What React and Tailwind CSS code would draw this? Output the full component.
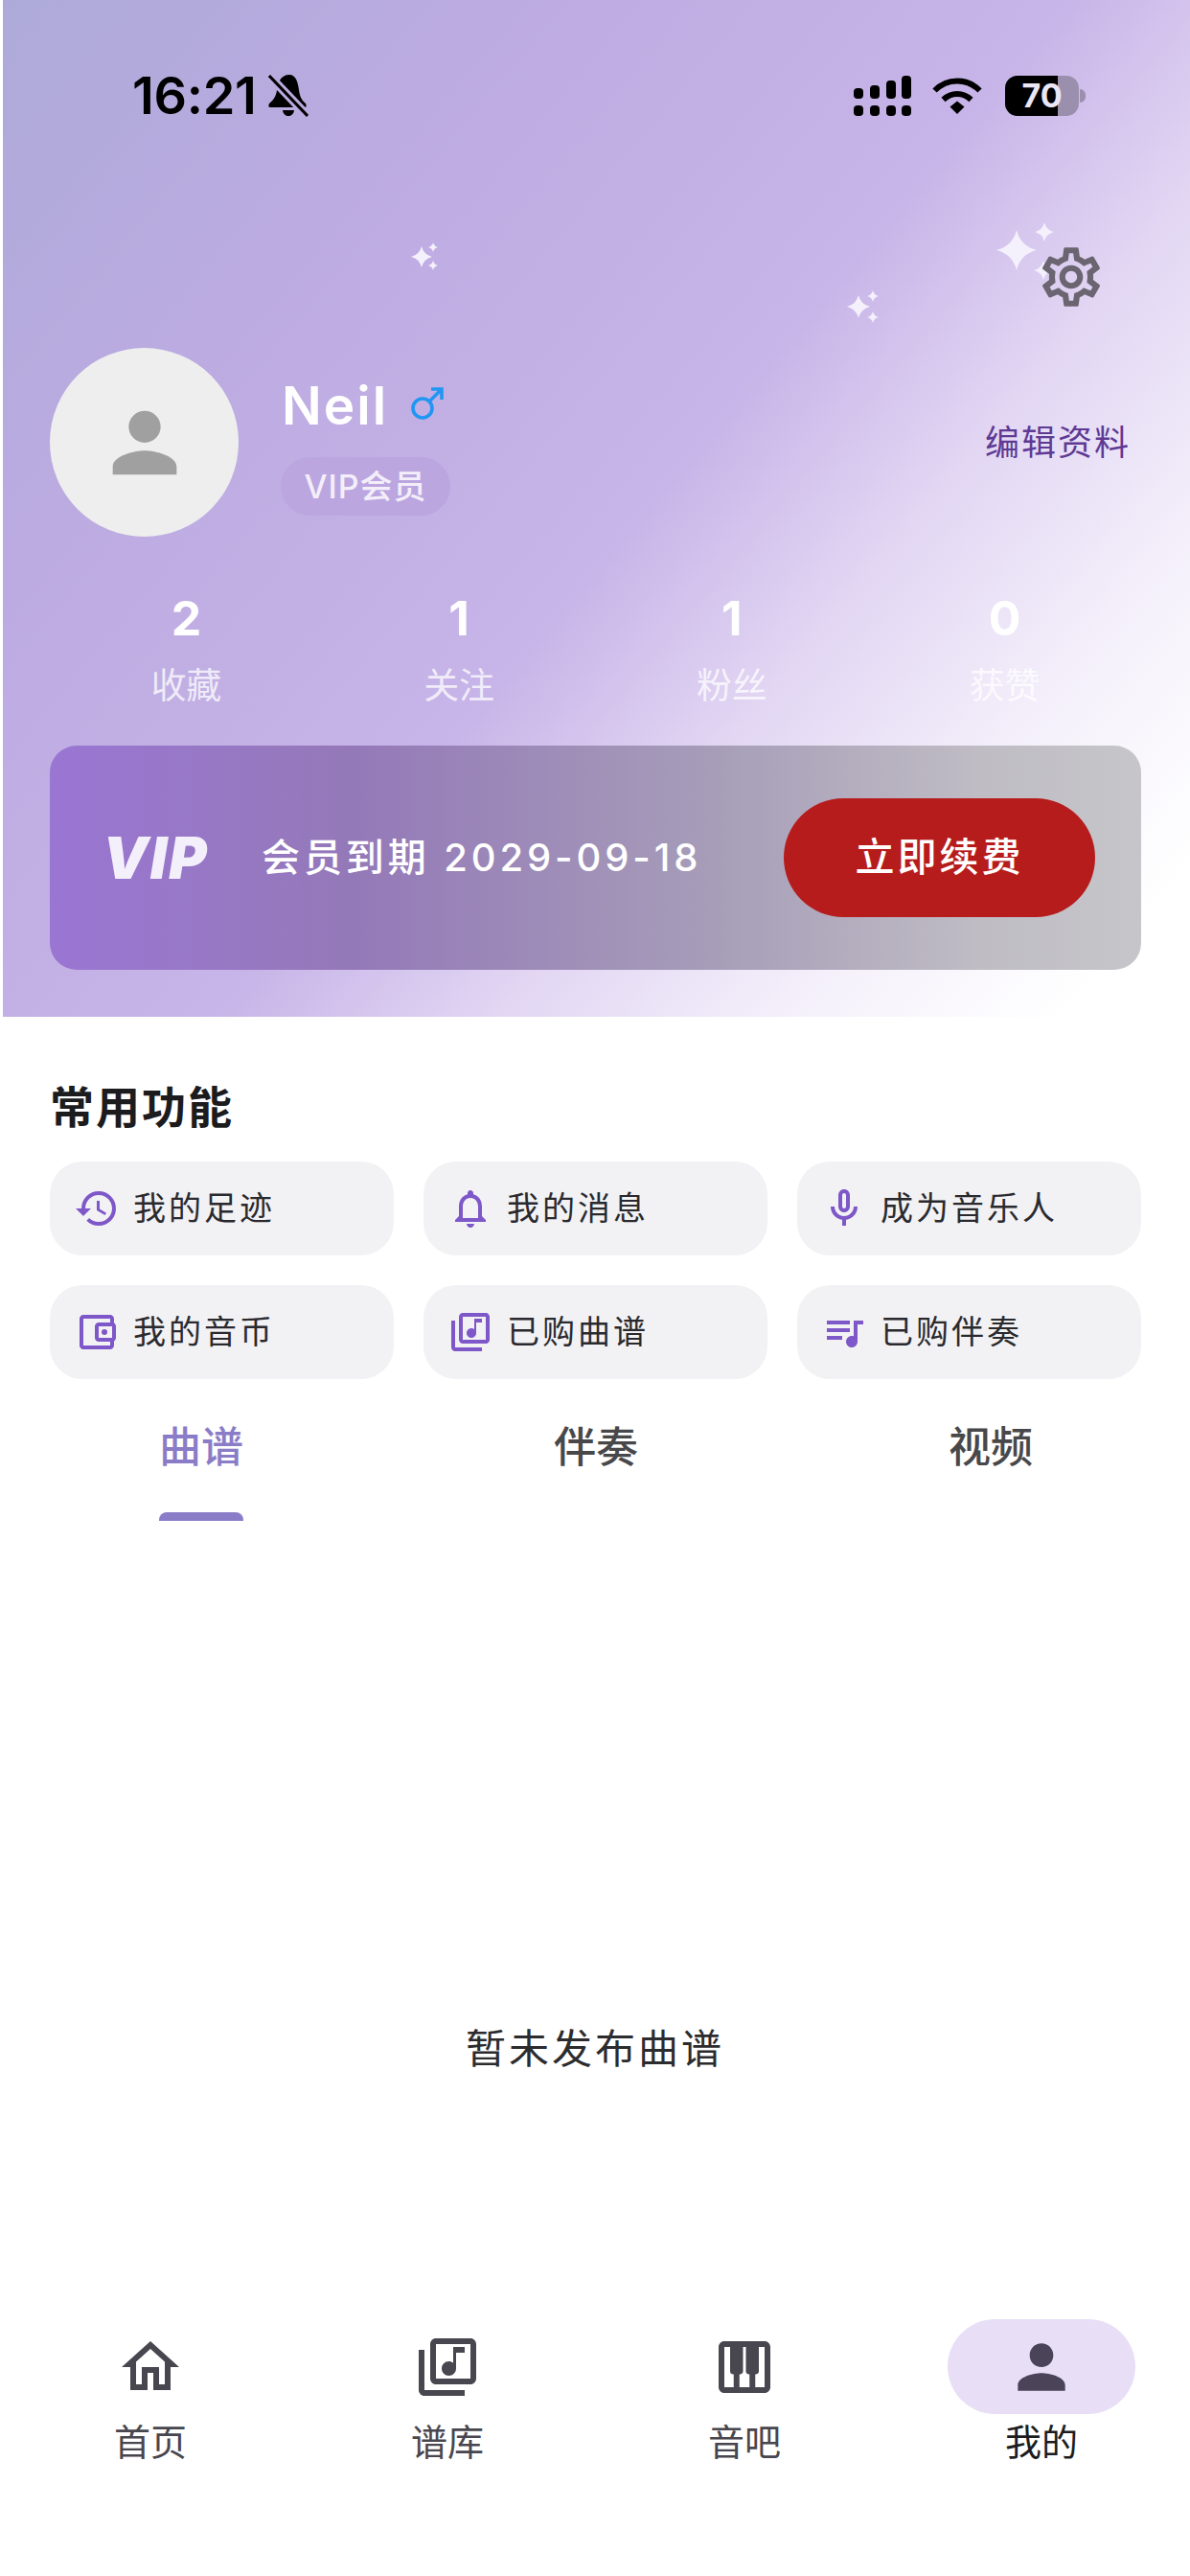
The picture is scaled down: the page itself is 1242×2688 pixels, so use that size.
const PURPLE = "#7e57c8";

function Icon({ d, size, color, children, className = "" }) {
  return (
    <svg width={size} height={size} viewBox="0 0 24 24" fill={color} className={`shrink-0 ${className}`}>
      <path d={d} />
      {children}
    </svg>
  );
}

const paths = {
  gear:
    "M19.43 12.98c.04-.32.07-.64.07-.98 0-.34-.03-.66-.07-.98l2.11-1.65c.19-.15.24-.42.12-.64l-2-3.46c-.09-.16-.26-.25-.44-.25-.06 0-.12.01-.17.03l-2.49 1c-.52-.4-1.08-.73-1.69-.98l-.38-2.65C14.46 2.18 14.25 2 14 2h-4c-.25 0-.46.18-.49.42l-.38 2.65c-.61.25-1.17.59-1.69.98l-2.49-1c-.06-.02-.12-.03-.18-.03-.17 0-.34.09-.43.25l-2 3.46c-.13.22-.07.49.12.64l2.11 1.65c-.04.32-.07.65-.07.98 0 .33.03.66.07.98l-2.11 1.65c-.19.15-.24.42-.12.64l2 3.46c.09.16.26.25.44.25.06 0 .12-.01.17-.03l2.49-1c.52.4 1.08.73 1.69.98l.38 2.65c.03.24.24.42.49.42h4c.25 0 .46-.18.49-.42l.38-2.65c.61-.25 1.17-.59 1.69-.98l2.49 1c.06.02.12.03.18.03.17 0 .34-.09.43-.25l2-3.46c.12-.22.07-.49-.12-.64l-2.11-1.65zm-1.98-1.71c.04.31.05.52.05.73 0 .21-.02.43-.05.73l-.14 1.13.89.7 1.08.84-.7 1.21-1.27-.51-1.04-.42-.9.68c-.43.32-.84.56-1.25.73l-1.06.43-.16 1.13-.2 1.35h-1.4l-.19-1.35-.16-1.13-1.06-.43c-.43-.18-.83-.41-1.23-.71l-.91-.7-1.06.43-1.27.51-.7-1.21 1.08-.84.89-.7-.14-1.13c-.03-.31-.05-.54-.05-.74s.02-.43.05-.73l.14-1.13-.89-.7-1.08-.84.7-1.21 1.27.51 1.04.42.9-.68c.43-.32.84-.56 1.25-.73l1.06-.43.16-1.13.2-1.35h1.39l.19 1.35.16 1.13 1.06.43c.43.18.83.41 1.23.71l.91.7 1.06-.43 1.27-.51.7 1.21-1.07.85-.89.7.14 1.13zM12 8c-2.21 0-4 1.79-4 4s1.79 4 4 4 4-1.79 4-4-1.79-4-4-4zm0 6c-1.1 0-2-.9-2-2s.9-2 2-2 2 .9 2 2-.9 2-2 2z",
  person:
    "M12 12c2.21 0 4-1.79 4-4s-1.79-4-4-4-4 1.79-4 4 1.79 4 4 4zm0 2c-2.67 0-8 1.34-8 4v2h16v-2c0-2.66-5.33-4-8-4z",
  history:
    "M13 3a9 9 0 0 0-9 9H1l3.89 3.89.07.14L9 12H6c0-3.87 3.13-7 7-7s7 3.13 7 7-3.13 7-7 7c-1.93 0-3.68-.79-4.94-2.06l-1.42 1.42A8.954 8.954 0 0 0 13 21a9 9 0 0 0 0-18zm-1 5v5l4.28 2.54.72-1.21-3.5-2.08V8H12z",
  bell:
    "M12 22c1.1 0 2-.9 2-2h-4c0 1.1.9 2 2 2zm6-6v-5c0-3.07-1.63-5.64-4.5-6.32V4c0-.83-.67-1.5-1.5-1.5s-1.5.67-1.5 1.5v.68C7.64 5.36 6 7.92 6 11v5l-2 2v1h16v-1l-2-2zm-2 1H8v-6c0-2.48 1.51-4.5 4-4.5s4 2.02 4 4.5v6z",
  mic:
    "M12 14c1.66 0 3-1.34 3-3V5c0-1.66-1.34-3-3-3S9 3.34 9 5v6c0 1.66 1.34 3 3 3zm-1-9c0-.55.45-1 1-1s1 .45 1 1v6c0 .55-.45 1-1 1s-1-.45-1-1V5zm6 6c0 2.76-2.24 5-5 5s-5-2.24-5-5H5c0 3.53 2.61 6.43 6 6.92V21h2v-3.08c3.39-.49 6-3.39 6-6.92h-2z",
  wallet:
    "M21 7.28V5c0-1.1-.9-2-2-2H5c-1.11 0-2 .9-2 2v14c0 1.1.89 2 2 2h14c1.1 0 2-.9 2-2v-2.28c.59-.35 1-.98 1-1.72V9c0-.74-.41-1.38-1-1.72zM20 9v6h-7V9h7zM5 19V5h14v2h-6c-1.1 0-2 .9-2 2v6c0 1.1.9 2 2 2h6v2H5z",
  library:
    "M20 2H8c-1.1 0-2 .9-2 2v12c0 1.1.9 2 2 2h12c1.1 0 2-.9 2-2V4c0-1.1-.9-2-2-2zm0 14H8V4h12v12zm-7.5-1c1.38 0 2.5-1.12 2.5-2.5V7h3V5h-4v5.51c-.42-.32-.93-.51-1.5-.51-1.38 0-2.5 1.12-2.5 2.5s1.12 2.5 2.5 2.5zM4 6H2v14c0 1.1.9 2 2 2h14v-2H4V6z",
  queue:
    "M15 6H3v2h12V6zm0 4H3v2h12v-2zM3 16h8v-2H3v2zM17 6v8.18c-.31-.11-.65-.18-1-.18-1.66 0-3 1.34-3 3s1.34 3 3 3 3-1.34 3-3V8h3V6h-5z",
  home: "M12 5.69l5 4.5V18h-2v-6H9v6H7v-7.81l5-4.5M12 3L2 12h3v8h6v-6h2v6h6v-8h3L12 3z",
  piano:
    "M19 3H5c-1.1 0-2 .9-2 2v14c0 1.1.9 2 2 2h14c1.1 0 2-.9 2-2V5c0-1.1-.9-2-2-2zm-5.5 11.5h.25V19h-3.5v-4.5h.25c.55 0 1-.45 1-1V5h1v8.5c0 .55.45 1 1 1zM5 5h2v8.5c0 .55.45 1 1 1h.25V19H5V5zm14 14h-3.25v-4.5H16c.55 0 1-.45 1-1V5h2v14z",
};

function Star({ x, y, r }) {
  const k = r * 0.2;
  const d = `M${x} ${y - r}Q${x + k} ${y - k} ${x + r} ${y}Q${x + k} ${y + k} ${x} ${y + r}Q${x - k} ${y + k} ${x - r} ${y}Q${x - k} ${y - k} ${x} ${y - r}Z`;
  return <path d={d} fill="#f4f0fc" />;
}

function StatusBar() {
  return (
    <div className="flex h-[60px] items-center justify-between pl-[135px] pr-[109px] text-black">
      <div className="flex items-center">
        <span className="text-[54px] font-semibold leading-[60px] tracking-[-0.3px]">16:21</span>
        {/* muted bell */}
        <svg width="42" height="44" viewBox="0 0 42 44" className="ml-[12px] shrink-0">
          <path d="M22 0C13 0 10 8 9 16C8 23 5 27 1 30C0 32 0 34 2 34H38C40 34 40 32 39 30C35 27 33 23 32 16C31 8 29 0 22 0Z" />
          <path d="M15 37H27C26 45 16 45 15 37Z" />
          <path d="M0 0L41 43" stroke="#bbaadf" strokeWidth="9" />
          <path d="M1 1L41 43" stroke="#000" strokeWidth="3" />
        </svg>
      </div>
      <div className="flex items-center">
        {/* signal */}
        <svg width="60" height="42" viewBox="0 0 60 42" className="shrink-0">
          <rect x="0" y="13" width="10" height="11" rx="4" />
          <rect x="17" y="10" width="10" height="14" rx="4" />
          <rect x="34" y="5" width="10" height="19" rx="4" />
          <rect x="50" y="0" width="10" height="24" rx="4" />
          <rect x="0" y="31" width="10" height="11" rx="4" />
          <rect x="17" y="31" width="10" height="11" rx="4" />
          <rect x="34" y="31" width="10" height="11" rx="4" />
          <rect x="50" y="31" width="10" height="11" rx="4" />
        </svg>
        {/* wifi */}
        <svg width="52" height="38" viewBox="0 0 52 38" fill="none" stroke="#000" strokeWidth="6" className="ml-[22px] shrink-0">
          <path d="M2.5 13.5C15.5 0 36.5 0 49.5 13.5" />
          <path d="M11.5 23C20 15 32 15 40.5 23" />
          <path d="M18.5 30.5L26 24.5L33.5 30.5L26 38Z" fill="#000" stroke="none" />
        </svg>
        {/* battery */}
        <div className="relative ml-[24px] flex h-[42px] w-[77px] overflow-hidden rounded-[13px] bg-[#9a8fad]">
          <div className="h-full w-[55px] bg-black" />
          <span className="absolute inset-0 flex items-center justify-center text-[34px] font-bold leading-none text-[#ebe6f5]">70</span>
        </div>
        <div className="ml-[1px] h-[14px] w-[6px] rounded-r-full bg-[#9a8fad]" />
      </div>
    </div>
  );
}

function Stat({ value, label }) {
  return (
    <div className="flex flex-col items-center">
      <span className="text-[50px] font-bold leading-[60px] text-white">{value}</span>
      <span className="mt-[17px] text-[37px] leading-[48px] text-white/75">{label}</span>
    </div>
  );
}

function Header() {
  return (
    <div className="relative ml-[3px] h-[1061px] bg-[linear-gradient(130deg,#adaad9_0%,#bcabe1_25%,#c7b4e8_52%,#e2d6f3_66%,#f5f1fb_81%,#ffffff_94%)] pt-[70px]">
      <svg width="1239" height="400" className="absolute left-0 top-0">
        <g transform="translate(-3 0)">
          <Star x={440} y={268} r={11} />
          <Star x={452} y={258} r={5} />
          <Star x={452} y={277} r={5} />
          <Star x={896} y={320} r={12} />
          <Star x={911} y={309} r={6} />
          <Star x={911} y={331} r={6} />
          <Star x={1061} y={261} r={21} />
          <Star x={1090} y={242} r={10} />
          <Star x={1089} y={282} r={10} />
        </g>
      </svg>
      <StatusBar />

      <div className="relative mt-[122px] flex h-[74px] justify-end pr-[87px]">
        <Icon d={paths.gear} size={74} color="#6a6570" />
      </div>

      <div className="relative mt-[37px] flex h-[197px] items-center pl-[49px] pr-[62px]">
        <div className="flex h-[197px] w-[197px] shrink-0 items-center justify-center rounded-full bg-[#eeeeee]">
          <Icon d={paths.person} size={100} color="#a0a0a0" />
        </div>
        <div className="ml-[45px] flex flex-col self-start pt-[30px]">
          <div className="flex h-[60px] items-center">
            <span className="text-[55px] font-semibold leading-[60px] tracking-[2px] text-white">Neil</span>
            <svg width="36" height="36" viewBox="0 0 36 36" fill="none" stroke="#2196f3" strokeWidth="3.6" className="ml-[23px] mt-[-4px]">
              <circle cx="13" cy="23" r="10" />
              <path d="M20.5 15.5L33 3M22 3H33V14" />
            </svg>
          </div>
          <div className="-ml-[1px] mt-[24px] flex h-[61px] w-[177px] items-center justify-center rounded-full bg-[#bba6e0] text-[34px] font-medium leading-none tracking-[1px] text-[#f3eefa]">
            VIP会员
          </div>
        </div>
        <span className="ml-auto text-[36px] leading-[48px] tracking-[2px] text-[#5e3a94]">编辑资料</span>
      </div>

      <div className="relative mt-[55px] grid grid-cols-4 pl-[49px] pr-[51px]">
        <Stat value="2" label="收藏" />
        <Stat value="1" label="关注" />
        <Stat value="1" label="粉丝" />
        <Stat value="0" label="获赞" />
      </div>

      <div className="relative ml-[49px] mr-[51px] mt-[38px] flex h-[234px] items-center rounded-[28px] bg-[linear-gradient(90deg,#9a76d3_0%,#9479b8_28%,#a69cb8_60%,#bfbcc4_85%,#c6c6ca_100%)] pl-[55px]">
        <span className="w-[112px] text-[60px] font-black italic leading-none tracking-[2px] text-[#f4f0fb]">VIP</span>
        <span className="ml-[54px] text-[40px] font-medium leading-[50px] tracking-[3.9px] text-white">会员到期 2029-09-18</span>
        <button className="absolute right-[48px] top-[55px] flex h-[124px] w-[325px] items-center justify-center rounded-full bg-[#b71c1c] text-[41px] font-medium tracking-[3px] text-white">
          立即续费
        </button>
      </div>
    </div>
  );
}

const shortcuts = [
  { label: "我的足迹", d: paths.history },
  { label: "我的消息", d: paths.bell },
  { label: "成为音乐人", d: paths.mic },
  { label: "我的音币", d: paths.wallet, dot: true },
  { label: "已购曲谱", d: paths.library },
  { label: "已购伴奏", d: paths.queue },
];

function Shortcuts() {
  return (
    <div className="pl-[52px] pr-[51px] pt-[64px]">
      <h2 className="mb-[27px] text-[46px] font-semibold leading-[60px] tracking-[2px] text-[#1c1c1e]">常用功能</h2>
      <div className="grid grid-cols-3 gap-x-[31px] gap-y-[31px]">
        {shortcuts.map((s) => (
          <div key={s.label} className="flex h-[98px] items-center rounded-[34px] bg-[#f2f2f5] pl-[25px]">
            <Icon d={s.d} size={48} color={PURPLE}>
              {s.dot && <circle cx="16" cy="12" r="1.5" />}
            </Icon>
            <span className="ml-[14px] text-[34px] leading-[44px] tracking-[3px] text-[#2a2a2e]">{s.label}</span>
          </div>
        ))}
      </div>
    </div>
  );
}

function Tabs() {
  const tabs = ["曲谱", "伴奏", "视频"];
  return (
    <div className="grid grid-cols-3 pl-[4px] pr-[2px] pt-[43px]">
      {tabs.map((t, i) => (
        <div key={t} className="flex flex-col items-center">
          <span className={`text-[44px] font-medium leading-[56px] ${i === 0 ? "text-[#8b7cc8]" : "text-[#48484a]"}`}>{t}</span>
          <div className={`mt-[40px] h-[9px] w-[88px] rounded-t-[8px] ${i === 0 ? "bg-[#8b7cc8]" : ""}`} />
        </div>
      ))}
    </div>
  );
}

const navItems = [
  { label: "首页", d: paths.home },
  { label: "谱库", d: paths.library },
  { label: "音吧", d: paths.piano },
  { label: "我的", d: paths.person, active: true },
];

function BottomNav() {
  return (
    <div className="grid grid-cols-4 pl-[2px]">
      {navItems.map((n) => (
        <div key={n.label} className="flex flex-col items-center">
          <div className={`flex h-[99px] w-[196px] items-center justify-center rounded-full ${n.active ? "bg-[#e8dff6]" : ""}`}>
            <Icon d={n.d} size={n.active ? 74 : 72} color={n.active ? "#4b4459" : "#48464e"} />
          </div>
          <span className={`mt-[5px] text-[38px] leading-[48px] ${n.active ? "text-[#1c1c1e]" : "text-[#48464e]"}`}>{n.label}</span>
        </div>
      ))}
    </div>
  );
}

export default function App() {
  return (
    <div className="flex h-[2688px] w-[1242px] flex-col overflow-hidden bg-white font-['Inter','Noto_Sans_CJK_SC',sans-serif]">
      <Header />
      <Shortcuts />
      <Tabs />
      <div className="flex h-[833px] justify-center pt-[523px]">
        <span className="text-[42px] leading-[56px] tracking-[3px] text-[#2c2c2e]">暂未发布曲谱</span>
      </div>
      <BottomNav />
    </div>
  );
}
